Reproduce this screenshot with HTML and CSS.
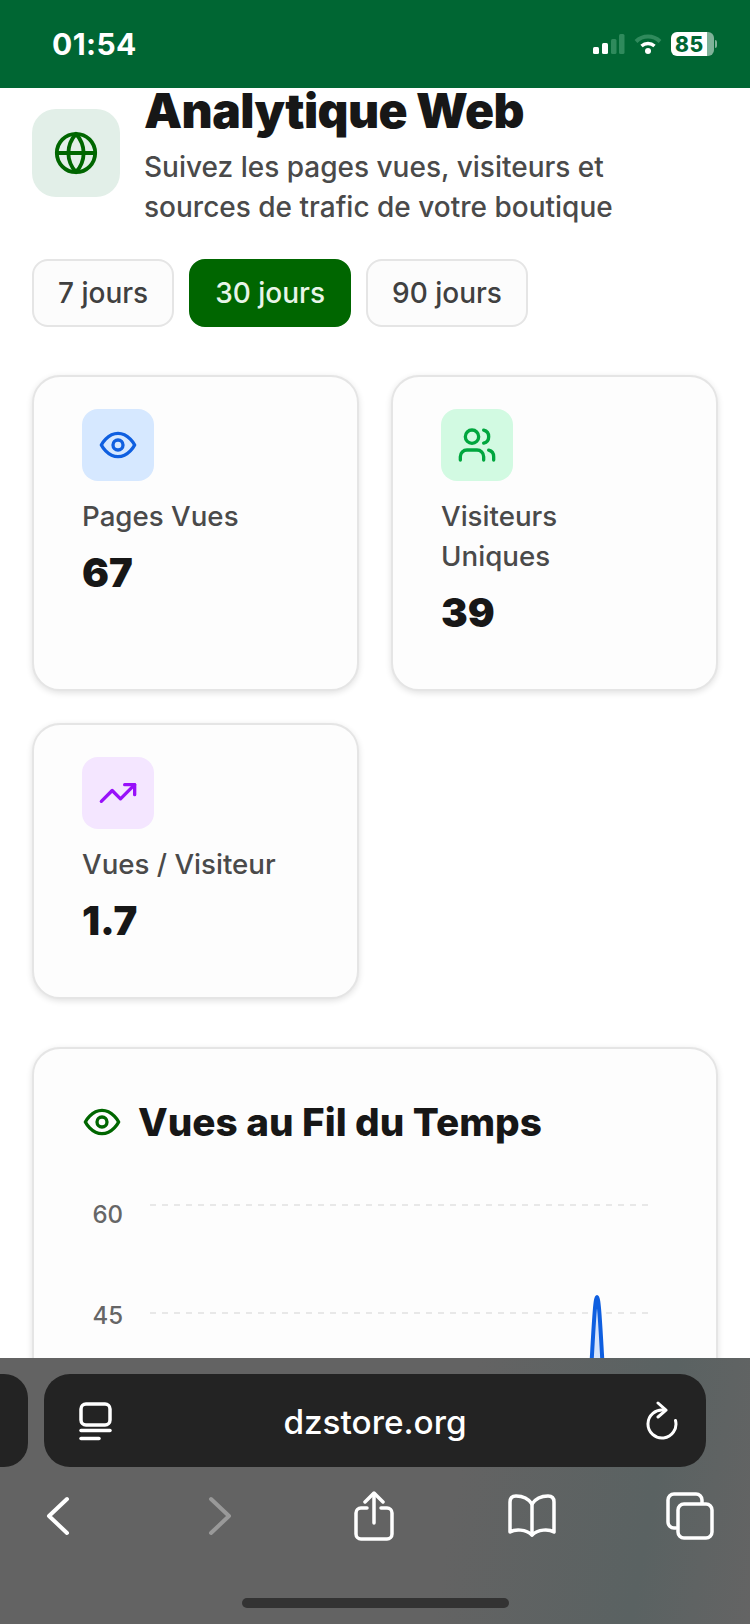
FILE: index.html
```html
<!DOCTYPE html>
<html lang="fr">
<head>
<meta charset="utf-8">
<title>Analytique Web</title>
<link rel="stylesheet" href="styles.css">
</head>
<body>
<div class="phone">
  <header class="status">
    <span class="time">01:54</span>
    <div class="status-right">
      <svg class="signal" width="32" height="20" viewBox="0 0 32 20"><rect x="0" y="13" width="6" height="7" rx="1.5" fill="#fff"/><rect x="9" y="9" width="6" height="11" rx="1.5" fill="#fff"/><rect x="18" y="5" width="5.500" height="15" rx="1.500" fill="#2f8a5c"/><rect x="26" y="0" width="5.500" height="20" rx="1.500" fill="#2f8a5c"/></svg>
      <svg class="wifi" width="28" height="20" viewBox="0 0 28 20"><path d="M2 7.500a17 17 0 0 1 24 0" fill="none" stroke="#2f8a5c" stroke-width="4"/><path d="M7.500 12a10 10 0 0 1 13 0" fill="none" stroke="#fff" stroke-width="3.500"/><circle cx="14" cy="17" r="3" fill="#fff"/></svg>
      <div class="battery"><div class="battery-body"><span class="battery-num">85</span></div><div class="battery-nub"></div></div>
    </div>
  </header>

  <main class="page">
    <section class="hero">
      <div class="hero-icon">
        <svg width="46" height="46" viewBox="0 0 24 24" fill="none" stroke="#006600" stroke-width="2" stroke-linecap="round" stroke-linejoin="round"><circle cx="12" cy="12" r="10"/><path d="M2 12h20"/><path d="M12 2a15.300 15.300 0 0 1 4 10 15.300 15.300 0 0 1-4 10 15.300 15.300 0 0 1-4-10 15.300 15.300 0 0 1 4-10z"/></svg>
      </div>
      <div class="hero-text">
        <h1 class="hero-title">Analytique Web</h1>
        <p class="hero-sub">Suivez les pages vues, visiteurs et sources de trafic de votre boutique</p>
      </div>
    </section>

    <nav class="pills">
      <button class="pill">7 jours</button>
      <button class="pill pill-active">30 jours</button>
      <button class="pill">90 jours</button>
    </nav>

    <section class="stats">
      <article class="card">
        <div class="stat-icon stat-blue">
          <svg width="40" height="40" viewBox="0 0 24 24" fill="none" stroke="#0f5fe0" stroke-width="2" stroke-linecap="round" stroke-linejoin="round"><path d="M2 12s3.600-7 10-7 10 7 10 7-3.600 7-10 7-10-7-10-7z"/><circle cx="12" cy="12" r="3"/></svg>
        </div>
        <div class="stat-label">Pages Vues</div>
        <div class="stat-value">67</div>
      </article>
      <article class="card">
        <div class="stat-icon stat-green">
          <svg width="40" height="40" viewBox="0 0 24 24" fill="none" stroke="#00a63e" stroke-width="2" stroke-linecap="round" stroke-linejoin="round"><path d="M16 21v-2a4 4 0 0 0-4-4H6a4 4 0 0 0-4 4v2"/><circle cx="9" cy="7" r="4"/><path d="M22 21v-2a4 4 0 0 0-3-3.870"/><path d="M16 3.130a4 4 0 0 1 0 7.750"/></svg>
        </div>
        <div class="stat-label">Visiteurs Uniques</div>
        <div class="stat-value">39</div>
      </article>
      <article class="card">
        <div class="stat-icon stat-purple">
          <svg width="40" height="40" viewBox="0 0 24 24" fill="none" stroke="#9810fa" stroke-width="2" stroke-linecap="round" stroke-linejoin="round"><polyline points="22 7 13.500 15.500 8.500 10.500 2 17"/><polyline points="16 7 22 7 22 13"/></svg>
        </div>
        <div class="stat-label">Vues / Visiteur</div>
        <div class="stat-value">1.7</div>
      </article>
    </section>

    <section class="card chart-card">
      <h2 class="chart-title">
        <svg width="40" height="40" viewBox="0 0 24 24" fill="none" stroke="#006600" stroke-width="2" stroke-linecap="round" stroke-linejoin="round"><path d="M2 12s3.600-7 10-7 10 7 10 7-3.600 7-10 7-10-7-10-7z"/><circle cx="12" cy="12" r="3"/></svg>
        <span>Vues au Fil du Temps</span>
      </h2>
      <svg class="chart" width="600" height="240" viewBox="0 0 600 240">
        <line class="grid" x1="68" y1="14" x2="566" y2="14"/>
        <line class="grid" x1="68" y1="122" x2="566" y2="122"/>
        <text class="axis" x="41" y="32" text-anchor="end">60</text>
        <text class="axis" x="41" y="133" text-anchor="end">45</text>
        <path class="area" d="M505 240C510 180 512 106 515 106C518 106 520 180 525 240Z"/>
        <path class="line" d="M505 240C510 180 512 106 515 106C518 106 520 180 525 240"/>
      </svg>
    </section>
  </main>

  <footer class="safari">
    <div class="url-row">
      <div class="tab-stub"></div>
      <div class="url-bar">
        <svg class="url-icon" width="36" height="40" viewBox="0 0 36 40" fill="none" stroke="#fff" stroke-width="3.500" stroke-linecap="round"><rect x="3" y="3" width="29" height="21" rx="5"/><path d="M3 29.500h29"/><path d="M3 37.500h18"/></svg>
        <span class="url-text">dzstore.org</span>
        <svg class="url-icon" width="32" height="40" viewBox="0 0 32 40" fill="none" stroke="#fff" stroke-width="3" stroke-linecap="round" stroke-linejoin="round"><path d="M18 9.200A14 14 0 1 0 29.500 19.500"/><path d="M12 2l8 7.200-8 6.800"/></svg>
      </div>
    </div>
    <div class="tools">
      <svg class="tool" width="26" height="40" viewBox="0 0 26 40" fill="none" stroke="#fff" stroke-width="4" stroke-linecap="round" stroke-linejoin="round"><path d="M22 3L4 20l18 17"/></svg>
      <svg class="tool tool-forward" width="26" height="40" viewBox="0 0 26 40" fill="none" stroke="#999" stroke-width="4" stroke-linecap="round" stroke-linejoin="round"><path d="M4 3l18 17L4 37"/></svg>
      <svg class="tool tool-share" width="40" height="50" viewBox="0 0 40 50" fill="none" stroke="#fff" stroke-width="3.500" stroke-linecap="round" stroke-linejoin="round"><path d="M13 17H7a5 5 0 0 0-5 5v21a5 5 0 0 0 5 5h26a5 5 0 0 0 5-5V22a5 5 0 0 0-5-5h-6"/><path d="M20 32V3"/><path d="M11 11l9-9 9 9"/></svg>
      <svg class="tool tool-book" width="50" height="44" viewBox="0 0 50 44" fill="none" stroke="#fff" stroke-width="3.500" stroke-linecap="round" stroke-linejoin="round"><path d="M25 10C21 4 15 2 9 2 5 2 3 4 3 8v30c5-3 16-3 22 3 6-6 17-6 22-3V8c0-4-2-6-6-6-6 0-12 2-16 8z"/><path d="M25 10v31"/></svg>
      <svg class="tool tool-tabs" width="48" height="48" viewBox="0 0 48 48" fill="none" stroke="#fff" stroke-width="3.500" stroke-linecap="round" stroke-linejoin="round"><path d="M10 36H8a6 6 0 0 1-6-6V8a6 6 0 0 1 6-6h22a6 6 0 0 1 6 6v3"/><rect x="12" y="12" width="34" height="34" rx="6"/></svg>
    </div>
    <div class="home-bar"></div>
  </footer>
</div>
</body>
</html>
```
FILE: styles.css
```css
* { box-sizing: border-box; }
html, body { margin: 0; padding: 0; }
body { font-family: Inter, "Noto Sans", sans-serif; background: #fff; color: #171717; }

.phone { width: 750px; height: 1624px; display: flex; flex-direction: column; overflow: hidden; }

.status { flex: 0 0 88px; background: #006633; display: flex; align-items: center; justify-content: space-between; padding: 0 33px 0 52px; }
.time { color: #fff; font-size: 30px; font-weight: 700; letter-spacing: .4px; }
.status-right { display: flex; align-items: center; gap: 9px; }
.battery { display: flex; align-items: center; gap: 1px; }
.battery-body { width: 43px; height: 24px; border-radius: 6px; background: linear-gradient(90deg, #fff 0, #fff 83%, #7fb299 83%); display: flex; align-items: center; padding-left: 4px; }
.battery-num { color: #006633; font-size: 21px; font-weight: 800; line-height: 1; letter-spacing: .5px; }
.battery-nub { width: 2px; height: 8px; border-radius: 0 2px 2px 0; background: #7fb299; }

.page { flex: 1 1 auto; min-height: 0; overflow: hidden; padding: 0 32px; }

.hero { display: flex; gap: 24px; align-items: flex-start; }
.hero-icon { flex: 0 0 88px; height: 88px; margin-top: 21px; border-radius: 24px; background: #e2efe8; display: flex; align-items: center; justify-content: center; }
.hero-title { margin: 0; font-size: 48px; line-height: 46px; font-weight: 900; letter-spacing: -.6px; color: #171717; }
.hero-sub { margin: 13px 0 0; font-size: 28px; line-height: 40px; font-weight: 500; color: #4a4a4a; width: 500px; }

.pills { display: flex; gap: 15px; margin-top: 32px; }
.pill { height: 68px; padding: 0 24px; border: 2px solid #e5e5e5; border-radius: 16px; background: #fcfcfc; font: 500 28px Inter, sans-serif; color: #404040; }
.pill-active { background: #006600; border-color: #006600; color: #e8f5e8; }

.stats { display: grid; grid-template-columns: 327px 327px; gap: 32px; margin-top: 48px; }
.card { background: #fdfdfd; border: 2px solid #e5e5e5; border-radius: 28px; padding: 32px 48px; box-shadow: 0 2px 6px rgba(0,0,0,.12); }
.stat-icon { width: 72px; height: 72px; border-radius: 16px; display: flex; align-items: center; justify-content: center; }
.stat-blue { background: #d6e8ff; }
.stat-green { background: #d2fae2; }
.stat-purple { background: #f4e6ff; }
.stat-label { margin-top: 15px; font-size: 27.700px; line-height: 40px; font-weight: 500; color: #4a4a4a; }
.stat-value { margin-top: 13px; font-size: 40px; line-height: 48px; font-weight: 900; color: #171717; }
.stats .card:nth-child(1), .stats .card:nth-child(2) { height: 316px; }
.stats .card:nth-child(3) { height: 276px; }

.chart-card { margin-top: 48px; width: 686px; height: 400px; padding: 49px 30px 0 48px; }
.chart-title { margin: 0; display: flex; align-items: center; gap: 16px; font-size: 38.700px; line-height: 48px; font-weight: 800; color: #171717; }
.chart { display: block; margin: 45px 0 0; }
.grid { stroke: #e8e8e8; stroke-width: 2; stroke-dasharray: 6 6; }
.axis { font: 500 24px Inter, sans-serif; fill: #666; }
.area { fill: #d6e4fb; }
.line { fill: none; stroke: #0f5fe0; stroke-width: 4; }

.safari { flex: 0 0 266px; background: linear-gradient(100deg, #636363 0, #636363 60%, #5a6262 85%, #646464 100%); position: relative; padding-top: 16px; }
.url-row { display: flex; gap: 16px; margin-left: -60px; }
.tab-stub { width: 88px; height: 93px; background: #232323; border-radius: 24px; }
.url-bar { width: 662px; height: 93px; background: #232323; border-radius: 26px; display: flex; align-items: center; justify-content: space-between; padding: 0 28px 0 34px; }
.url-text { color: #fff; font-size: 33.300px; font-weight: 500; margin: 2px 10px 0 0; }
.tools { display: flex; align-items: center; padding: 24px 0 0 45px; }
.tool { flex: none; }
.tool-forward { margin-left: 136px; }
.tool-share { margin-left: 121px; }
.tool-book { margin-left: 113px; }
.tool-tabs { margin-left: 109px; }
.home-bar { width: 267px; height: 10px; border-radius: 5px; background: #333; position: absolute; left: 242px; bottom: 16px; }
```
